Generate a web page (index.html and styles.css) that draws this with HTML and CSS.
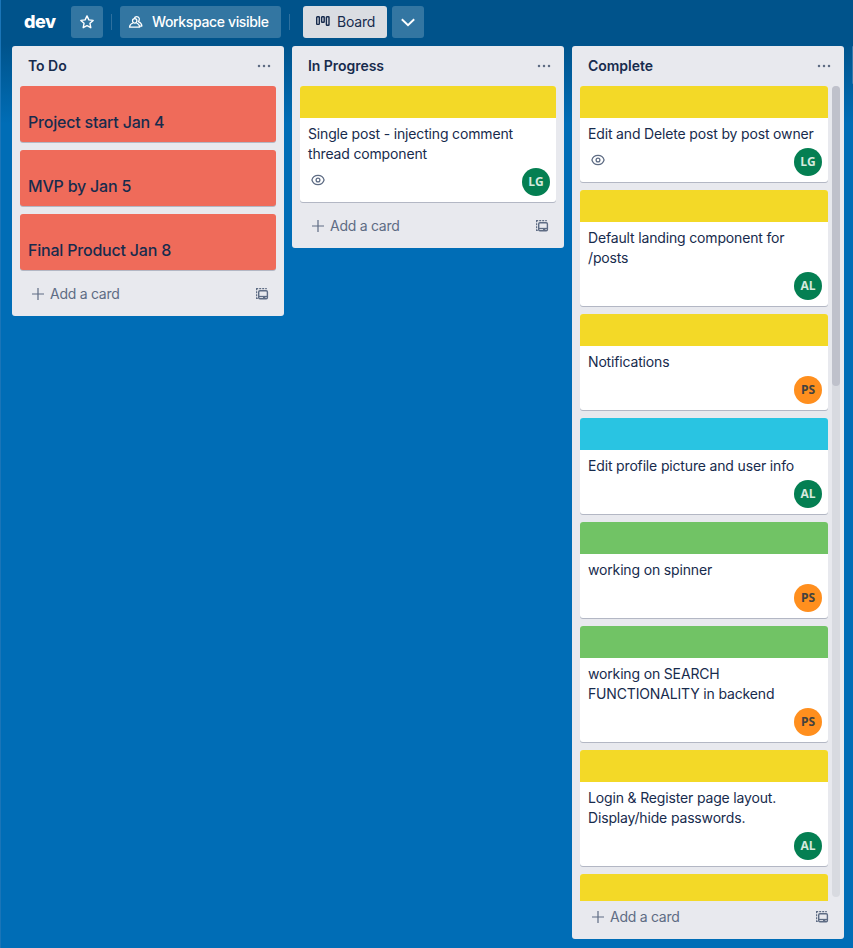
FILE: index.html
```html
<!DOCTYPE html>
<html lang="en">
<head>
<meta charset="utf-8">
<title>dev board</title>
<link rel="stylesheet" href="styles.css">
</head>
<body>
<svg width="0" height="0" class="defs">
  <defs>
    <symbol id="dots" viewBox="0 0 16 16"><circle cx="3" cy="8" r="1.25" fill="currentColor"/><circle cx="8" cy="8" r="1.25" fill="currentColor"/><circle cx="13" cy="8" r="1.25" fill="currentColor"/></symbol>
    <symbol id="plus" viewBox="0 0 16 16"><path d="M8 2v12M2 8h12" fill="none" stroke="currentColor" stroke-width="1.2"/></symbol>
    <symbol id="template" viewBox="0 0 16 16"><path d="M2.600 4.200V2.600h1.600M5.200 2.600h2M8.200 2.600h2M11.200 2.600h1.600M2.600 5.200v2M2.600 8.200v2M2.600 11.200v1.200h1.200" fill="none" stroke="currentColor" stroke-width="1.2"/><rect x="4.700" y="4.700" width="8.700" height="8" rx="1.2" fill="none" stroke="currentColor" stroke-width="1.4"/><path d="M5 10.500h8.400" stroke="currentColor" stroke-width="1.300"/><path d="M9 10.500h2.400v2H9z" fill="currentColor"/></symbol>
    <symbol id="eye" viewBox="0 0 16 16"><path d="M1.900 8C2.800 5 5.200 3.400 8 3.400S13.200 5 14.100 8C13.200 11 10.800 12.600 8 12.600S2.800 11 1.900 8z" fill="none" stroke="currentColor" stroke-width="1.200"/><circle cx="8" cy="8" r="1.900" fill="none" stroke="currentColor" stroke-width="1.300"/></symbol>
  </defs>
</svg>
<header class="topbar">
  <h1 class="name">dev</h1>
  <button class="btn icon-btn star"><svg width="16" height="16" viewBox="0 0 16 16"><path d="M8 1.900l1.850 4 4.300.5-3.200 2.950.85 4.350L8 11.600l-3.800 2.100.85-4.350L1.850 6.400l4.300-.5z" fill="none" stroke="currentColor" stroke-width="1.400" stroke-linejoin="round"/></svg></button>
  <span class="sep"></span>
  <button class="btn visible"><svg width="16" height="16" viewBox="0 0 16 16" fill="none" stroke="currentColor" stroke-width="1.250" stroke-linejoin="round"><circle cx="6.700" cy="6.800" r="2.200"/><path d="M5 9C2.900 9.600 1.700 11 1.500 13.200h10.200C11.500 11 10.400 9.600 8.400 9M6.300 4.500C6.900 2 10.700 1.700 11.300 4.700c.2 1.200-.2 2.200-1 2.900 2 .7 3.400 2.200 3.600 4.400h-2.400"/></svg><span>Workspace visible</span></button>
  <span class="sep"></span>
  <button class="btn board-btn"><svg width="16" height="16" viewBox="0 0 16 16" fill="none" stroke="currentColor" stroke-width="1.400"><rect x="1.700" y="2.700" width="2.600" height="7.700" rx=".6"/><rect x="6.600" y="2.700" width="2.600" height="5.600" rx=".6"/><rect x="11.400" y="2.700" width="2.600" height="8.600" rx=".6"/></svg><span>Board</span></button>
  <button class="btn icon-btn"><svg width="16" height="16" viewBox="0 0 16 16"><path d="M1.800 5.200L8 11.200l6.200-6" fill="none" stroke="currentColor" stroke-width="1.900"/></svg></button>
</header>
<main class="lists">
  <section class="list">
    <div class="head"><h2>To Do</h2><svg class="ic"><use href="#dots"/></svg></div>
    <div class="cards">
      <article class="card full">Project start Jan 4</article>
      <article class="card full">MVP by Jan 5</article>
      <article class="card full">Final Product Jan 8</article>
    </div>
    <div class="foot"><svg class="ic"><use href="#plus"/></svg><span>Add a card</span><svg class="ic end"><use href="#template"/></svg></div>
  </section>
  <section class="list">
    <div class="head"><h2>In Progress</h2><svg class="ic"><use href="#dots"/></svg></div>
    <div class="cards">
      <article class="card"><div class="cover yellow"></div><p>Single post - injecting comment<br>thread component</p><div class="meta"><svg class="ic"><use href="#eye"/></svg><span class="avatar green-av">LG</span></div></article>
    </div>
    <div class="foot"><svg class="ic"><use href="#plus"/></svg><span>Add a card</span><svg class="ic end"><use href="#template"/></svg></div>
  </section>
  <section class="list tall">
    <div class="head"><h2>Complete</h2><svg class="ic"><use href="#dots"/></svg></div>
    <div class="scroller">
      <div class="cards">
        <article class="card"><div class="cover yellow"></div><p>Edit and Delete post by post owner</p><div class="meta"><svg class="ic"><use href="#eye"/></svg><span class="avatar green-av">LG</span></div></article>
        <article class="card"><div class="cover yellow"></div><p>Default landing component for<br>/posts</p><div class="meta"><span class="avatar green-av">AL</span></div></article>
        <article class="card"><div class="cover yellow"></div><p>Notifications</p><div class="meta"><span class="avatar orange-av">PS</span></div></article>
        <article class="card"><div class="cover sky"></div><p>Edit profile picture and user info</p><div class="meta"><span class="avatar green-av">AL</span></div></article>
        <article class="card"><div class="cover green"></div><p>working on spinner</p><div class="meta"><span class="avatar orange-av">PS</span></div></article>
        <article class="card"><div class="cover green"></div><p>working on SEARCH<br>FUNCTIONALITY in backend</p><div class="meta"><span class="avatar orange-av">PS</span></div></article>
        <article class="card"><div class="cover yellow"></div><p>Login &amp; Register page layout.<br>Display/hide passwords.</p><div class="meta"><span class="avatar green-av">AL</span></div></article>
        <article class="card"><div class="cover yellow"></div></article>
      </div>
      <div class="track"><div class="thumb"></div></div>
    </div>
    <div class="foot"><svg class="ic"><use href="#plus"/></svg><span>Add a card</span><svg class="ic end"><use href="#template"/></svg></div>
  </section>
  <div class="add-list"></div>
</main>
</body>
</html>
```
FILE: styles.css
```css
* { box-sizing: border-box; }
body {
  margin: 0;
  height: 948px;
  overflow: hidden;
  border-left: 1px solid #1a75b8;
  background: #006db6 linear-gradient(#00538b 0, #00538b 44px, #006db6 124px);
  color: #172b4d;
  font: 14px/20px Inter, "Liberation Sans", sans-serif;
}
.defs { position: absolute; }
svg { display: block; flex: none; }
.ic { width: 16px; height: 16px; color: #5e6c84; }
h1, h2, p { margin: 0; }
.topbar { display: flex; height: 46px; padding: 6px 0 0 23px; }
.name { width: 47px; font-size: 18px; line-height: 31px; font-weight: 800; letter-spacing: -.5px; color: #fff; }
.btn {
  display: flex;
  align-items: center;
  height: 32px;
  padding: 0;
  border: 0;
  border-radius: 3px;
  background: #3376a2;
  color: #fff;
  font: inherit;
}
.icon-btn { width: 32px; justify-content: center; }
.sep { width: 1px; height: 16px; margin: 8px 8px 0; background: #2d709f; }
.visible { width: 161px; padding-left: 8px; gap: 8px; font-weight: 500; letter-spacing: -.36px; }
.board-btn { width: 84px; margin: 0 5px; padding-left: 12px; gap: 6px; background: #dadde2; color: #172b4d; letter-spacing: -.2px; }
.lists { display: flex; align-items: flex-start; gap: 8px; padding-left: 11px; }
.list { flex: none; width: 272px; border-radius: 3px; background: #e8e9ee; }
.head { display: flex; align-items: center; justify-content: space-between; height: 40px; padding: 0 12px 0 16px; }
.head h2 { font-size: 14px; font-weight: 600; letter-spacing: -.04px; }
.cards { display: flex; flex-direction: column; gap: 8px; margin: 0 8px; }
.card { flex: none; border-radius: 3px; background: #fff; box-shadow: 0 1px 0 #b3b7c4; overflow: hidden; }
.full { height: 56px; padding: 26px 8px 0; background: #ef6b5a; font-size: 16px; font-weight: 500; letter-spacing: -.21px; }
.cover { height: 32px; }
.yellow { background: #f3d927; }
.sky { background: #29c4e2; }
.green { background: #71c365; }
.card p { padding: 6px 8px 0; white-space: nowrap; letter-spacing: -.16px; }
.meta { display: flex; height: 38px; padding: 4px 6px 0 10px; }
.meta .ic { margin-top: 4px; }
.avatar {
  width: 28px;
  height: 28px;
  margin-left: auto;
  border-radius: 50%;
  font: 700 12px/28px "Open Sans", "Noto Sans", sans-serif;
  text-align: center;
}
.green-av { background: #047f52; color: #d5eade; }
.orange-av { background: #ff8f1e; color: #42413f; }
.foot { display: flex; align-items: center; height: 46px; padding: 2px 14px 0 18px; gap: 4px; color: #5e6c84; letter-spacing: -.27px; }
.end { margin-left: auto; }
.tall { height: 893px; }
.scroller { display: flex; height: 815px; overflow: hidden; }
.scroller .cards { width: 248px; margin: 0 4px 0 8px; }
.track { width: 8px; height: 811px; border-radius: 4px; background: #d8dae0; }
.thumb { height: 300px; border-radius: 4px; background: #bfc1cb; }
.tall .foot { height: 32px; padding-top: 0; }
.add-list { flex: 1; height: 38px; border-radius: 3px 0 0 3px; background: #3379ad; }
```
